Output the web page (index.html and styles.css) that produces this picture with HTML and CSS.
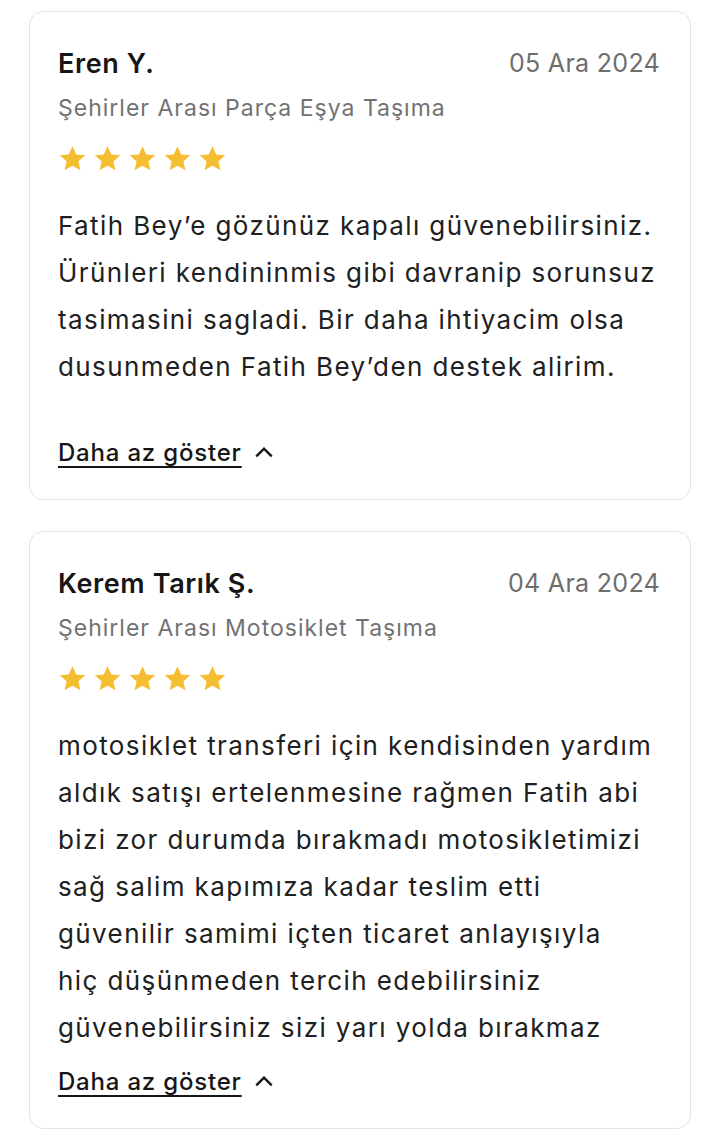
FILE: index.html
```html
<!DOCTYPE html>
<html lang="tr">
<head>
    <meta charset="UTF-8">
    <meta name="viewport" content="width=device-width, initial-scale=1.0">
    <title>Yorumlar</title>
    <link rel="stylesheet" href="styles.css">
</head>
<body>
    <div class="review review-first">
        <div class="review-head">
            <h3 class="review-name">Eren Y.</h3>
            <span class="review-date">05 Ara 2024</span>
        </div>
        <p class="review-service">Şehirler Arası Parça Eşya Taşıma</p>
        <div class="stars">
            <svg viewBox="0 0 24 24"><path d="M12 1.8l3.1 6.9 7.4.7-5.6 5 1.7 7.4L12 17.9l-6.6 3.9 1.7-7.4-5.6-5 7.4-.7z"/></svg>
            <svg viewBox="0 0 24 24"><path d="M12 1.8l3.1 6.9 7.4.7-5.6 5 1.7 7.4L12 17.9l-6.6 3.9 1.7-7.4-5.6-5 7.4-.7z"/></svg>
            <svg viewBox="0 0 24 24"><path d="M12 1.8l3.1 6.9 7.4.7-5.6 5 1.7 7.4L12 17.9l-6.6 3.9 1.7-7.4-5.6-5 7.4-.7z"/></svg>
            <svg viewBox="0 0 24 24"><path d="M12 1.8l3.1 6.9 7.4.7-5.6 5 1.7 7.4L12 17.9l-6.6 3.9 1.7-7.4-5.6-5 7.4-.7z"/></svg>
            <svg viewBox="0 0 24 24"><path d="M12 1.8l3.1 6.9 7.4.7-5.6 5 1.7 7.4L12 17.9l-6.6 3.9 1.7-7.4-5.6-5 7.4-.7z"/></svg>
        </div>
        <p class="review-text">Fatih Bey’e gözünüz kapalı güvenebilirsiniz.<br>Ürünleri kendininmis gibi davranip sorunsuz<br>tasimasini sagladi. Bir daha ihtiyacim olsa<br>dusunmeden Fatih Bey’den destek alirim.</p>
        <a class="toggle" href="#">
            <span>Daha az göster</span>
            <svg viewBox="0 0 20 20"><path d="M3 14l7-7 7 7"/></svg>
        </a>
    </div>

    <div class="review">
        <div class="review-head">
            <h3 class="review-name">Kerem Tarık Ş.</h3>
            <span class="review-date">04 Ara 2024</span>
        </div>
        <p class="review-service">Şehirler Arası Motosiklet Taşıma</p>
        <div class="stars">
            <svg viewBox="0 0 24 24"><path d="M12 1.8l3.1 6.9 7.4.7-5.6 5 1.7 7.4L12 17.9l-6.6 3.9 1.7-7.4-5.6-5 7.4-.7z"/></svg>
            <svg viewBox="0 0 24 24"><path d="M12 1.8l3.1 6.9 7.4.7-5.6 5 1.7 7.4L12 17.9l-6.6 3.9 1.7-7.4-5.6-5 7.4-.7z"/></svg>
            <svg viewBox="0 0 24 24"><path d="M12 1.8l3.1 6.9 7.4.7-5.6 5 1.7 7.4L12 17.9l-6.6 3.9 1.7-7.4-5.6-5 7.4-.7z"/></svg>
            <svg viewBox="0 0 24 24"><path d="M12 1.8l3.1 6.9 7.4.7-5.6 5 1.7 7.4L12 17.9l-6.6 3.9 1.7-7.4-5.6-5 7.4-.7z"/></svg>
            <svg viewBox="0 0 24 24"><path d="M12 1.8l3.1 6.9 7.4.7-5.6 5 1.7 7.4L12 17.9l-6.6 3.9 1.7-7.4-5.6-5 7.4-.7z"/></svg>
        </div>
        <p class="review-text">motosiklet transferi için kendisinden yardım<br>aldık satışı ertelenmesine rağmen Fatih abi<br>bizi zor durumda bırakmadı motosikletimizi<br>sağ salim kapımıza kadar teslim etti<br>güvenilir samimi içten ticaret anlayışıyla<br>hiç düşünmeden tercih edebilirsiniz<br>güvenebilirsiniz sizi yarı yolda bırakmaz</p>
        <a class="toggle" href="#">
            <span>Daha az göster</span>
            <svg viewBox="0 0 20 20"><path d="M3 14l7-7 7 7"/></svg>
        </a>
    </div>
</body>
</html>
```

FILE: styles.css
```css
body {
    background-color: #fff;
    color: #1f1f1f;
    font-family: Inter, "Noto Sans", Arial, sans-serif;
    margin: 0;
    padding: 11px 29px 0 29px;
    display: flex;
    flex-direction: column;
    gap: 31px;
}
.review {
    border: 1px solid #e4e4e4;
    border-radius: 14px;
    padding: 35px 30px 31px 28px;
    display: flex;
    flex-direction: column;
}
.review-head {
    display: flex;
    justify-content: space-between;
    align-items: center;
    height: 32px;
}
.review-name {
    margin: 0;
    font-size: 27px;
    font-weight: 600;
    letter-spacing: 0.6px;
    color: #161616;
}
.review-date {
    font-size: 25px;
    letter-spacing: 0.3px;
    color: #6e6e6e;
}
.review-service {
    margin: 13px 0 0 0;
    font-size: 23px;
    letter-spacing: 1px;
    line-height: 32px;
    color: #727272;
}
.stars {
    display: flex;
    gap: 6px;
    margin-top: 20px;
    height: 28px;
}
.stars svg {
    width: 29px;
    height: 29px;
    fill: #f5bd32;
}
.review-text {
    margin: 30px 0 0 0;
    font-size: 26px;
    letter-spacing: 1.4px;
    line-height: 47px;
    color: #202020;
}
.toggle {
    display: flex;
    align-items: center;
    gap: 11px;
    margin-top: 14px;
    height: 32px;
    color: #161616;
    text-decoration: none;
    font-size: 24px;
    letter-spacing: 0.8px;
    font-weight: 500;
}
.toggle span {
    text-decoration: underline;
    text-decoration-skip-ink: none;
    text-underline-offset: 5px;
    text-decoration-thickness: 2px;
}
.toggle svg {
    width: 22px;
    height: 22px;
    fill: none;
    stroke: #161616;
    stroke-width: 2.2;
}
.review-first .toggle {
    margin-top: 46px;
}
```
